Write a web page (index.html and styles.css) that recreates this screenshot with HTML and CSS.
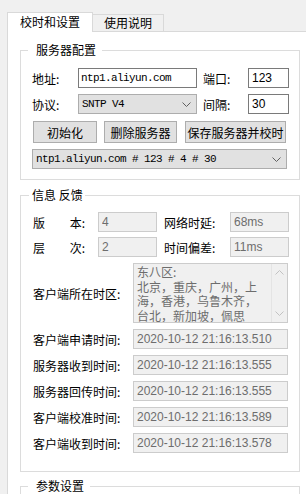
FILE: index.html
```html
<!DOCTYPE html>
<html lang="zh-CN">
<head>
    <meta charset="UTF-8">
    <meta name="viewport" content="width=device-width, initial-scale=1.0">
    <title>校时和设置</title>
    <link rel="stylesheet" href="styles.css">
</head>
<body>

    <!-- Tab strip -->
    <div class="tabs">
        <div class="tab active">校时和设置</div>
        <div class="tab">使用说明</div>
    </div>

    <div class="panel">

        <!-- Server settings -->
        <fieldset class="group">
            <legend>服务器配置</legend>

            <div class="row">
                <span class="lbl w46">地址:</span>
                <input class="edit mono" style="width: 119px" value="ntp1.aliyun.com">
                <span class="lbl w45 gap6">端口:</span>
                <input class="edit" style="width: 41px" value="123">
            </div>

            <div class="row r2">
                <span class="lbl w46">协议:</span>
                <div class="combo mono" style="width: 119px">
                    <span>SNTP V4</span>
                    <svg class="arrow" width="9" height="5" viewBox="0 0 9 5"><polyline points="0.5,0.5 4.5,4.5 8.5,0.5" fill="none" stroke="#606060" stroke-width="1"/></svg>
                </div>
                <span class="lbl w45 gap6">间隔:</span>
                <input class="edit" style="width: 41px" value="30">
            </div>

            <div class="row buttons">
                <button style="width: 64px">初始化</button>
                <button style="width: 73px">删除服务器</button>
                <button style="width: 101px">保存服务器并校时</button>
            </div>

            <div class="row r4">
                <div class="combo mono" style="width: 255px">
                    <span>ntp1.aliyun.com # 123 # 4 # 30</span>
                    <svg class="arrow" width="9" height="5" viewBox="0 0 9 5"><polyline points="0.5,0.5 4.5,4.5 8.5,0.5" fill="none" stroke="#606060" stroke-width="1"/></svg>
                </div>
            </div>
        </fieldset>

        <!-- Feedback -->
        <fieldset class="group info">
            <legend>信息 反馈</legend>

            <div class="row">
                <span class="lbl w65"><span class="spread"><span>版</span><span>本:</span></span></span>
                <input class="edit off" style="width: 59px" value="4" disabled>
                <span class="lbl w66 gap7">网络时延:</span>
                <input class="edit off" style="width: 59px" value="68ms" disabled>
            </div>

            <div class="row ra">
                <span class="lbl w65"><span class="spread"><span>层</span><span>次:</span></span></span>
                <input class="edit off" style="width: 59px" value="2" disabled>
                <span class="lbl w66 gap7">时间偏差:</span>
                <input class="edit off" style="width: 59px" value="11ms" disabled>
            </div>

            <div class="row rb">
                <span class="lbl w100">客户端所在时区:</span>
                <div class="memo">
                    <div class="memo-text">东八区:<br>北京，重庆，广州，上<br>海，香港，乌鲁木齐，<br>台北，新加坡，佩思</div>
                    <div class="vscroll">
                        <svg width="9" height="5" viewBox="0 0 9 5"><polyline points="0.5,4.5 4.5,0.5 8.5,4.5" fill="none" stroke="#c2c2c2" stroke-width="1"/></svg>
                        <svg width="9" height="5" viewBox="0 0 9 5"><polyline points="0.5,0.5 4.5,4.5 8.5,0.5" fill="none" stroke="#c2c2c2" stroke-width="1"/></svg>
                    </div>
                </div>
            </div>

            <div class="row rb">
                <span class="lbl w100">客户端申请时间:</span>
                <input class="edit off" style="width: 155px" value="2020-10-12 21:16:13.510" disabled>
            </div>
            <div class="row rb">
                <span class="lbl w100">服务器收到时间:</span>
                <input class="edit off" style="width: 155px" value="2020-10-12 21:16:13.555" disabled>
            </div>
            <div class="row rb">
                <span class="lbl w100">服务器回传时间:</span>
                <input class="edit off" style="width: 155px" value="2020-10-12 21:16:13.555" disabled>
            </div>
            <div class="row rb">
                <span class="lbl w100">客户端校准时间:</span>
                <input class="edit off" style="width: 155px" value="2020-10-12 21:16:13.589" disabled>
            </div>
            <div class="row rb">
                <span class="lbl w100">客户端收到时间:</span>
                <input class="edit off" style="width: 155px" value="2020-10-12 21:16:13.578" disabled>
            </div>
        </fieldset>

        <!-- Parameters -->
        <fieldset class="group params">
            <legend>参数设置</legend>
        </fieldset>

    </div>

</body>
</html>
```

FILE: styles.css
```css
* {
    box-sizing: border-box;
}

body {
    margin: 0;
    height: 494px;
    overflow: hidden;
    background-color: #f0f0f0;
    font-family: "Noto Sans CJK SC", sans-serif;
    font-size: 12px;
    color: #000;
}

/* Tabs */

.tabs {
    display: flex;
    align-items: flex-end;
    height: 31px;
    padding-left: 7px;
}

.tab {
    height: 17px;
    line-height: 15px;
    padding: 0 11px;
    margin-left: -1px;
    border: 1px solid #d9d9d9;
    border-bottom: none;
    background-color: #f0f0f0;
}

.tab.active {
    position: relative;
    z-index: 1;
    height: 20px;
    line-height: 18px;
    padding: 0 12px;
    margin-left: 0;
    margin-bottom: -1px;
    background-color: #fff;
}

.panel {
    width: 299px;
    height: 463px;
    margin-left: 7px;
    padding-left: 12px;
    border-top: 1px solid #d9d9d9;
    border-left: 1px solid #d9d9d9;
    background-color: #fff;
    overflow: hidden;
}

/* Group boxes */

.group {
    width: 280px;
    min-width: 0;
    margin: 11px 0 0;
    padding: 11px 10px 10px 11px;
    border: 1px solid #dcdcdc;
}

.group legend {
    margin-left: -4px;
    padding: 0 6px 0 8px;
    line-height: 14px;
}

.group.info {
    margin-top: 8px;
    padding: 10px 10px 18px 12px;
}

.group.info legend {
    padding: 0 2px 0 3px;
}

.group.params {
    margin-top: 7px;
    height: 40px;
}

/* Rows */

.row {
    display: flex;
    align-items: center;
    height: 20px;
}

.r2 { margin-top: 6px; }
.r4 { margin-top: 6px; }
.ra { margin-top: 5px; }
.rb { margin-top: 6px; height: auto; }

.buttons {
    height: 22px;
    margin-top: 7px;
    padding-left: 1px;
    gap: 7px;
}

.buttons button + button + button {
    margin-left: 1px;
}

.lbl {
    flex-shrink: 0;
    white-space: nowrap;
}

.w45 { width: 45px; }
.w46 { width: 46px; }
.w65 { width: 65px; }
.w66 { width: 66px; }
.w100 { width: 100px; }
.gap6 { margin-left: 6px; }
.gap7 { margin-left: 7px; }

.spread {
    display: flex;
    justify-content: space-between;
    width: 52px;
}

/* Controls */

.edit {
    height: 20px;
    margin: 0;
    padding: 0 3px;
    border: 1px solid #7a7a7a;
    background-color: #fff;
    font-family: "Liberation Sans", Arial, sans-serif;
    font-size: 12px;
    color: #000;
    outline: none;
}

.edit.off {
    border-color: #cccccc;
    background-color: #f0f0f0;
    color: #6d6d6d;
}

.mono {
    font-family: "Liberation Mono", "Courier New", monospace;
    font-size: 11px;
    letter-spacing: -0.6px;
}

.edit.mono {
    padding-left: 2px;
}

.combo {
    display: flex;
    align-items: center;
    justify-content: space-between;
    height: 20px;
    padding: 0 5px 0 3px;
    border: 1px solid #adadad;
    background-color: #e1e1e1;
    color: #000;
}

.combo .arrow {
    flex-shrink: 0;
}

button {
    height: 22px;
    padding: 0;
    border: 1px solid #adadad;
    background-color: #e1e1e1;
    font-family: "Noto Sans CJK SC", sans-serif;
    font-size: 12px;
    color: #000;
    white-space: nowrap;
}

.memo {
    display: flex;
    width: 155px;
    height: 60px;
    border: 1px solid #cccccc;
    background-color: #f0f0f0;
    color: #6d6d6d;
    overflow: hidden;
}

.memo-text {
    flex-grow: 1;
    padding: 1px 0 0 3px;
    line-height: 14.5px;
    white-space: nowrap;
}

.vscroll {
    width: 16px;
    display: flex;
    flex-direction: column;
    justify-content: space-between;
    align-items: center;
    padding: 6px 0 6px;
    border-left: 1px solid #e4e4e4;
}
```
